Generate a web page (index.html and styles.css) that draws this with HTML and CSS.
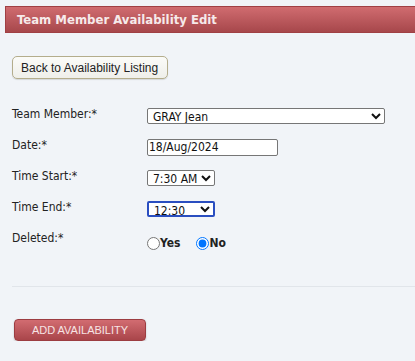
FILE: index.html
```html
<!DOCTYPE html>
<html lang="en">
<head>
    <meta charset="UTF-8">
    <meta name="viewport" content="width=device-width, initial-scale=1.0">
    <title>Team Member Availability Edit</title>
    <link rel="stylesheet" href="styles.css">
</head>
<body>

<div class="page">
    <h2 class="title-bar">Team Member Availability Edit</h2>

    <div class="content">
        <button type="button" class="btn-back">Back to Availability Listing</button>

        <form id="availForm" class="form">
            <div class="form-row">
                <label for="member">Team Member:*</label>
                <select id="member" class="sel-wide">
                    <option>GRAY Jean</option>
                </select>
            </div>
            <div class="form-row">
                <label for="date">Date:*</label>
                <input type="text" id="date" class="date-input" value="18/Aug/2024">
            </div>
            <div class="form-row">
                <label for="start">Time Start:*</label>
                <select id="start" class="sel-time">
                    <option>7:30 AM</option>
                </select>
            </div>
            <div class="form-row">
                <label for="end">Time End:*</label>
                <select id="end" class="sel-time focused">
                    <option>12:30</option>
                </select>
            </div>
            <div class="form-row radio-row">
                <label>Deleted:*</label>
                <div class="radios">
                    <span class="radio-opt"><input type="radio" name="deleted" id="delYes"><b>Yes</b></span>
                    <span class="radio-opt"><input type="radio" name="deleted" id="delNo" checked><b>No</b></span>
                </div>
            </div>
        </form>

        <hr class="divider">

        <button type="button" class="btn-add">ADD AVAILABILITY</button>
    </div>
</div>

</body>
</html>
```

FILE: styles.css
```css
body {
    margin: 0;
    padding: 0;
    background-color: #f1f4f8;
    font-family: "DejaVu Sans Condensed", "DejaVu Sans", sans-serif;
    font-size: 12px;
    color: #222;
}
.page {
    padding: 6px 0 0 5px;
}
.title-bar {
    margin: 0;
    height: 27px;
    line-height: 26px;
    padding-left: 11px;
    font-family: "DejaVu Sans Condensed", "DejaVu Sans", sans-serif;
    font-size: 13px;
    font-weight: bold;
    color: #f6eaea;
    background: linear-gradient(#d06c70, #a7474b);
    border: 1px solid #a04044;
    border-right: none;
    box-sizing: border-box;
}
.content {
    padding: 23px 0 0 7px;
}
.btn-back {
    font-family: "Liberation Sans", Arial, sans-serif;
    font-size: 12px;
    color: #222;
    height: 23px;
    padding: 0 9px 0 8px;
    background: linear-gradient(#fbfbf8, #efefea);
    border: 1px solid #b4ad8c;
    border-radius: 5px;
    box-shadow: 0 1px 1px rgba(0, 0, 0, 0.12);
}
.form {
    margin-top: 29px;
}
.form-row {
    display: flex;
    align-items: center;
    height: 16px;
    margin-bottom: 15px;
}
.form-row label {
    width: 135px;
    font-size: 12px;
    position: relative;
    top: -2px;
}
select, .date-input {
    font-family: "DejaVu Sans Condensed", "DejaVu Sans", sans-serif;
    font-size: 12px;
    height: 16px;
    box-sizing: border-box;
    border: 1px solid #767676;
    border-radius: 2px;
    background: #fff;
    color: #111;
    padding: 0 1px;
}
.sel-wide {
    width: 238px;
}
.date-input {
    width: 131px;
    height: 17px;
}
.sel-time {
    width: 68px;
}
.focused {
    border: 2px solid #2a4ec0;
    outline: none;
}
.radios {
    display: flex;
    gap: 16px;
    margin-top: 6px;
    font-size: 12px;
}
.radio-opt {
    display: flex;
    align-items: center;
}
.radio-opt input {
    margin: 0;
    width: 13px;
    height: 13px;
}
.divider {
    border: none;
    border-top: 1px solid #e1e5ea;
    margin: 38px 0 0 0;
}
.btn-add {
    margin: 32px 0 0 2px;
    width: 132px;
    height: 22px;
    font-family: "Liberation Sans", Arial, sans-serif;
    font-size: 11px;
    color: #f7e4e5;
    background: linear-gradient(#d26c71, #a9454a);
    border: 1px solid #9c3c41;
    border-radius: 4px;
    box-shadow: 0 1px 2px rgba(0, 0, 0, 0.2);
}
```
